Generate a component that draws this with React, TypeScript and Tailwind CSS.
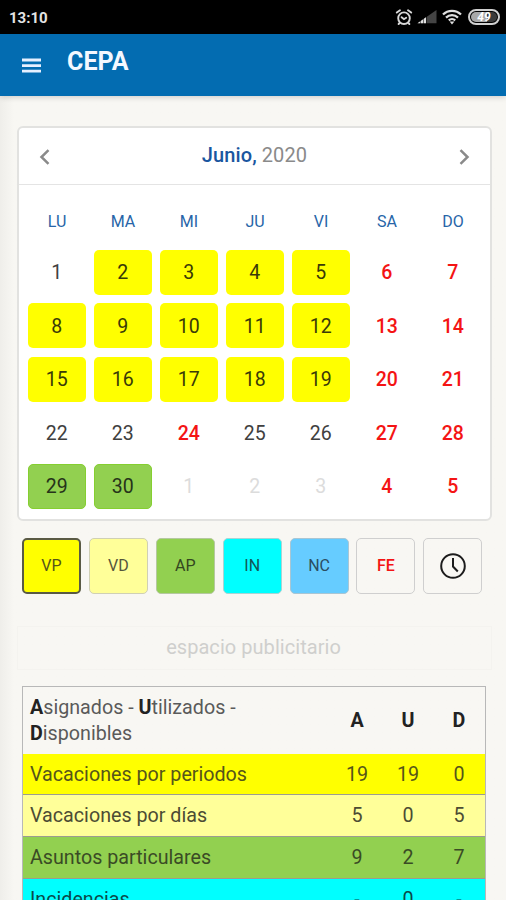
import React from 'react';

interface Day {
  label: number;
  kind?: 'vp' | 'ap' | 'fe' | 'off';
}

const WEEKDAYS = ['LU', 'MA', 'MI', 'JU', 'VI', 'SA', 'DO'];

const WEEKS: Day[][] = [
  [{ label: 1 }, { label: 2, kind: 'vp' }, { label: 3, kind: 'vp' }, { label: 4, kind: 'vp' }, { label: 5, kind: 'vp' }, { label: 6, kind: 'fe' }, { label: 7, kind: 'fe' }],
  [{ label: 8, kind: 'vp' }, { label: 9, kind: 'vp' }, { label: 10, kind: 'vp' }, { label: 11, kind: 'vp' }, { label: 12, kind: 'vp' }, { label: 13, kind: 'fe' }, { label: 14, kind: 'fe' }],
  [{ label: 15, kind: 'vp' }, { label: 16, kind: 'vp' }, { label: 17, kind: 'vp' }, { label: 18, kind: 'vp' }, { label: 19, kind: 'vp' }, { label: 20, kind: 'fe' }, { label: 21, kind: 'fe' }],
  [{ label: 22 }, { label: 23 }, { label: 24, kind: 'fe' }, { label: 25 }, { label: 26 }, { label: 27, kind: 'fe' }, { label: 28, kind: 'fe' }],
  [{ label: 29, kind: 'ap' }, { label: 30, kind: 'ap' }, { label: 1, kind: 'off' }, { label: 2, kind: 'off' }, { label: 3, kind: 'off' }, { label: 4, kind: 'fe' }, { label: 5, kind: 'fe' }],
];

const DAY_STYLES = {
  vp: 'bg-[#ffff00] text-[#3a3a08]',
  ap: 'bg-[#92d050] border border-[#85cf30] text-[#26331a]',
  fe: 'text-[#f41414] font-medium',
  off: 'text-[#dcdcdc]',
};

const TYPES = [
  { id: 'VP', style: 'bg-[#ffff00] border-2 border-[#5a5a44] text-[#55551a]' },
  { id: 'VD', style: 'bg-[#ffff99] border border-[#d0d0b4] text-[#55553c]' },
  { id: 'AP', style: 'bg-[#92d050] border border-[#b5c8a0] text-[#34471f]' },
  { id: 'IN', style: 'bg-[#00ffff] border border-[#a8d4d4] text-[#125555]' },
  { id: 'NC', style: 'bg-[#66ccff] border border-[#a9c6d4] text-[#2b4d61]' },
  { id: 'FE', style: 'border border-[#cfcfcf] text-[#f41414] font-medium' },
];

const ROWS = [
  { name: 'Vacaciones por periodos', values: ['19', '19', '0'], style: 'h-[41px] bg-[#ffff00] text-[#55551a]' },
  { name: 'Vacaciones por días', values: ['5', '0', '5'], style: 'h-[42px] bg-[#ffff99] text-[#4c4c34]' },
  { name: 'Asuntos particulares', values: ['9', '2', '7'], style: 'h-[42px] bg-[#92d050] text-[#3a4b25]' },
  { name: 'Incidencias', values: ['-', '0', '-'], style: 'h-[42px] bg-[#00ffff] text-[#0b4a4a]' },
];

const StatusBar: React.FC = () => (
  <div className="h-[34px] shrink-0 bg-black flex items-center justify-between pl-[9px] pr-[6px] text-[#e4e4e4]">
    <span className="text-[15px] font-bold leading-none pt-[3px]">13:10</span>
    <div className="flex items-center">
      <svg width="18" height="18" viewBox="0 0 18 18" fill="none" stroke="#d8d8d8" strokeWidth="1.9" strokeLinecap="round">
        <circle cx="9" cy="10.2" r="5.8" />
        <path d="M6.6 9.2 9 11.2l2.2-1.4M1.8 4.6 5 2.2M16.2 4.6 13 2.2M4.6 15 3.6 16M13.4 15l1 1" />
      </svg>
      <svg className="ml-[4px]" width="20" height="16" viewBox="0 0 20 16">
        <path d="M.5 14.2 19.500 1v13.200z" fill="#444" />
        <path d="M.5 14.200 9 8.300v5.900z" fill="#e0e0e0" />
        <path d="M3.500 10v5M6.500 8v7M9.500 6v9" stroke="#000" strokeWidth=".5" />
      </svg>
      <svg className="ml-[5px]" width="20" height="16" viewBox="0 0 20 16" fill="none" stroke="#e0e0e0" strokeWidth="2.200">
        <path d="M1 5.600a12.600 12.600 0 0 1 18 0M4 8.600a8.600 8.600 0 0 1 12 0M6.800 11.400a4.600 4.600 0 0 1 6.400 0" />
        <path d="m10 15.400-2.400-2.800h4.800z" fill="#e0e0e0" stroke="none" />
      </svg>
      <div className="ml-[6px] w-8 h-4 rounded-full border-2 border-[#d0d0d0] p-px">
        <div className="h-full rounded-full bg-linear-to-r from-[#a8a8a8] from-60% to-[#3a3a3a] to-60% flex items-center justify-center text-[12px] font-bold italic leading-none text-white">
          49
        </div>
      </div>
    </div>
  </div>
);

const Chevron: React.FC<{ d: string }> = ({ d }) => (
  <svg width="12" height="16" viewBox="0 0 12 16" fill="none" stroke="#8a8a8a" strokeWidth="2.500">
    <path d={d} />
  </svg>
);

const Calendar: React.FC = () => (
  <section className="ml-[17px] mt-[29.500px] w-[475px] h-[395px] bg-white border-2 border-[#e2e2e0] rounded-md">
    <div className="h-[57px] border-b border-[#e4e4e4] flex items-center justify-between px-5">
      <button className="pt-[2px]"><Chevron d="M9.500 1.200 2.500 8l7 6.800" /></button>
      <h2 className="pb-[2px] text-[20px] leading-6 tracking-[0.100px]">
        <span className="font-medium text-[#1a56a0]">Junio,</span>{' '}
        <span className="text-[#8a8a8a]">2020</span>
      </h2>
      <button className="pt-[2px]"><Chevron d="M2.500 1.200 9.500 8l-7 6.800" /></button>
    </div>
    <div className="pl-[5px] pr-[4px]">
      <div className="grid grid-cols-7 h-[65px] pt-[27px] text-center text-[16px] leading-5 text-[#2765a8]">
        {WEEKDAYS.map((name) => <span key={name}>{name}</span>)}
      </div>
      <div className="space-y-[8.500px]">
        {WEEKS.map((week, i) => (
          <div key={i} className="grid grid-cols-7 text-[19.500px]">
            {week.map((day) => (
              <div
                key={day.label}
                className={`ml-[4px] mr-[4.500px] h-[45px] pt-[1.500px] rounded-[5px] flex items-center justify-center ${day.kind ? DAY_STYLES[day.kind] : 'text-[#404040]'}`}
              >
                {day.label}
              </div>
            ))}
          </div>
        ))}
      </div>
    </div>
  </section>
);

const App: React.FC = () => {
  return (
    <div className="w-[506px] h-[900px] overflow-hidden flex flex-col bg-[#f8f7f3] font-[Roboto,sans-serif]">
      <StatusBar />
      <header className="h-[62px] shrink-0 bg-[#036cb1] flex items-center pl-[22px] shadow-[0_1px_6px_rgba(0,0,0,0.18)] z-10">
        <svg width="19" height="15" viewBox="0 0 19 15" stroke="#e6f0ff" strokeWidth="2.800">
          <path d="M0 2h19M0 7.600h19M0 13.200h19" />
        </svg>
        <h1 className="ml-[26px] pb-[6px] text-[25px] font-bold leading-7 tracking-[0.100px] text-[#f4f8ff]">CEPA</h1>
      </header>

      <main className="flex-1 min-h-0 overflow-hidden bg-linear-to-r from-[#efeeea] to-[#f8f7f3] to-[14px]">
        <Calendar />

        <div className="ml-[22px] mt-[17.500px] flex gap-[7.900px] text-[16px]">
          {TYPES.map((type) => (
            <button key={type.id} className={`w-[59px] h-[56px] rounded-[5px] ${type.style}`}>{type.id}</button>
          ))}
          <button className="w-[59px] h-[56px] rounded-[5px] border border-[#cfcfcf] flex items-center justify-center">
            <svg width="26" height="26" viewBox="0 0 26 26" fill="none" stroke="#1c1c1c" strokeWidth="2">
              <circle cx="13" cy="13" r="11.800" />
              <path d="M13 5v8.500l4.800 5" />
            </svg>
          </button>
        </div>

        <div className="ml-[17px] mt-[32px] w-[475px] h-[44px] border border-[#f4f3ef] flex items-center justify-center pb-[2px] pr-[2px] text-[20px] tracking-[0.050px] text-[#cfcfcd]">
          espacio publicitario
        </div>

        <div className="ml-[22px] mt-[16px] w-[463.500px] border border-[#b8b8b8] text-[19.700px]">
          <div className="h-[67px] grid grid-cols-[1fr_51px_51px_51px] items-center text-[#222]">
            <p className="pl-[7px] leading-[26px] text-[#5a5a5a]">
              <b className="text-[#222]">A</b>signados - <b className="text-[#222]">U</b>tilizados -<br />
              <b className="text-[#222]">D</b>isponibles
            </p>
            <b className="text-center">A</b>
            <b className="text-center">U</b>
            <b className="text-center">D</b>
          </div>
          {ROWS.map((row) => (
            <div key={row.name} className={`grid grid-cols-[1fr_51px_51px_51px] items-center border-b border-[#9c9c90] ${row.style}`}>
              <span className="pl-[7px] pt-px">{row.name}</span>
              {row.values.map((value, i) => <span key={i} className="pt-px text-center">{value}</span>)}
            </div>
          ))}
        </div>
      </main>
    </div>
  );
};

export default App;
